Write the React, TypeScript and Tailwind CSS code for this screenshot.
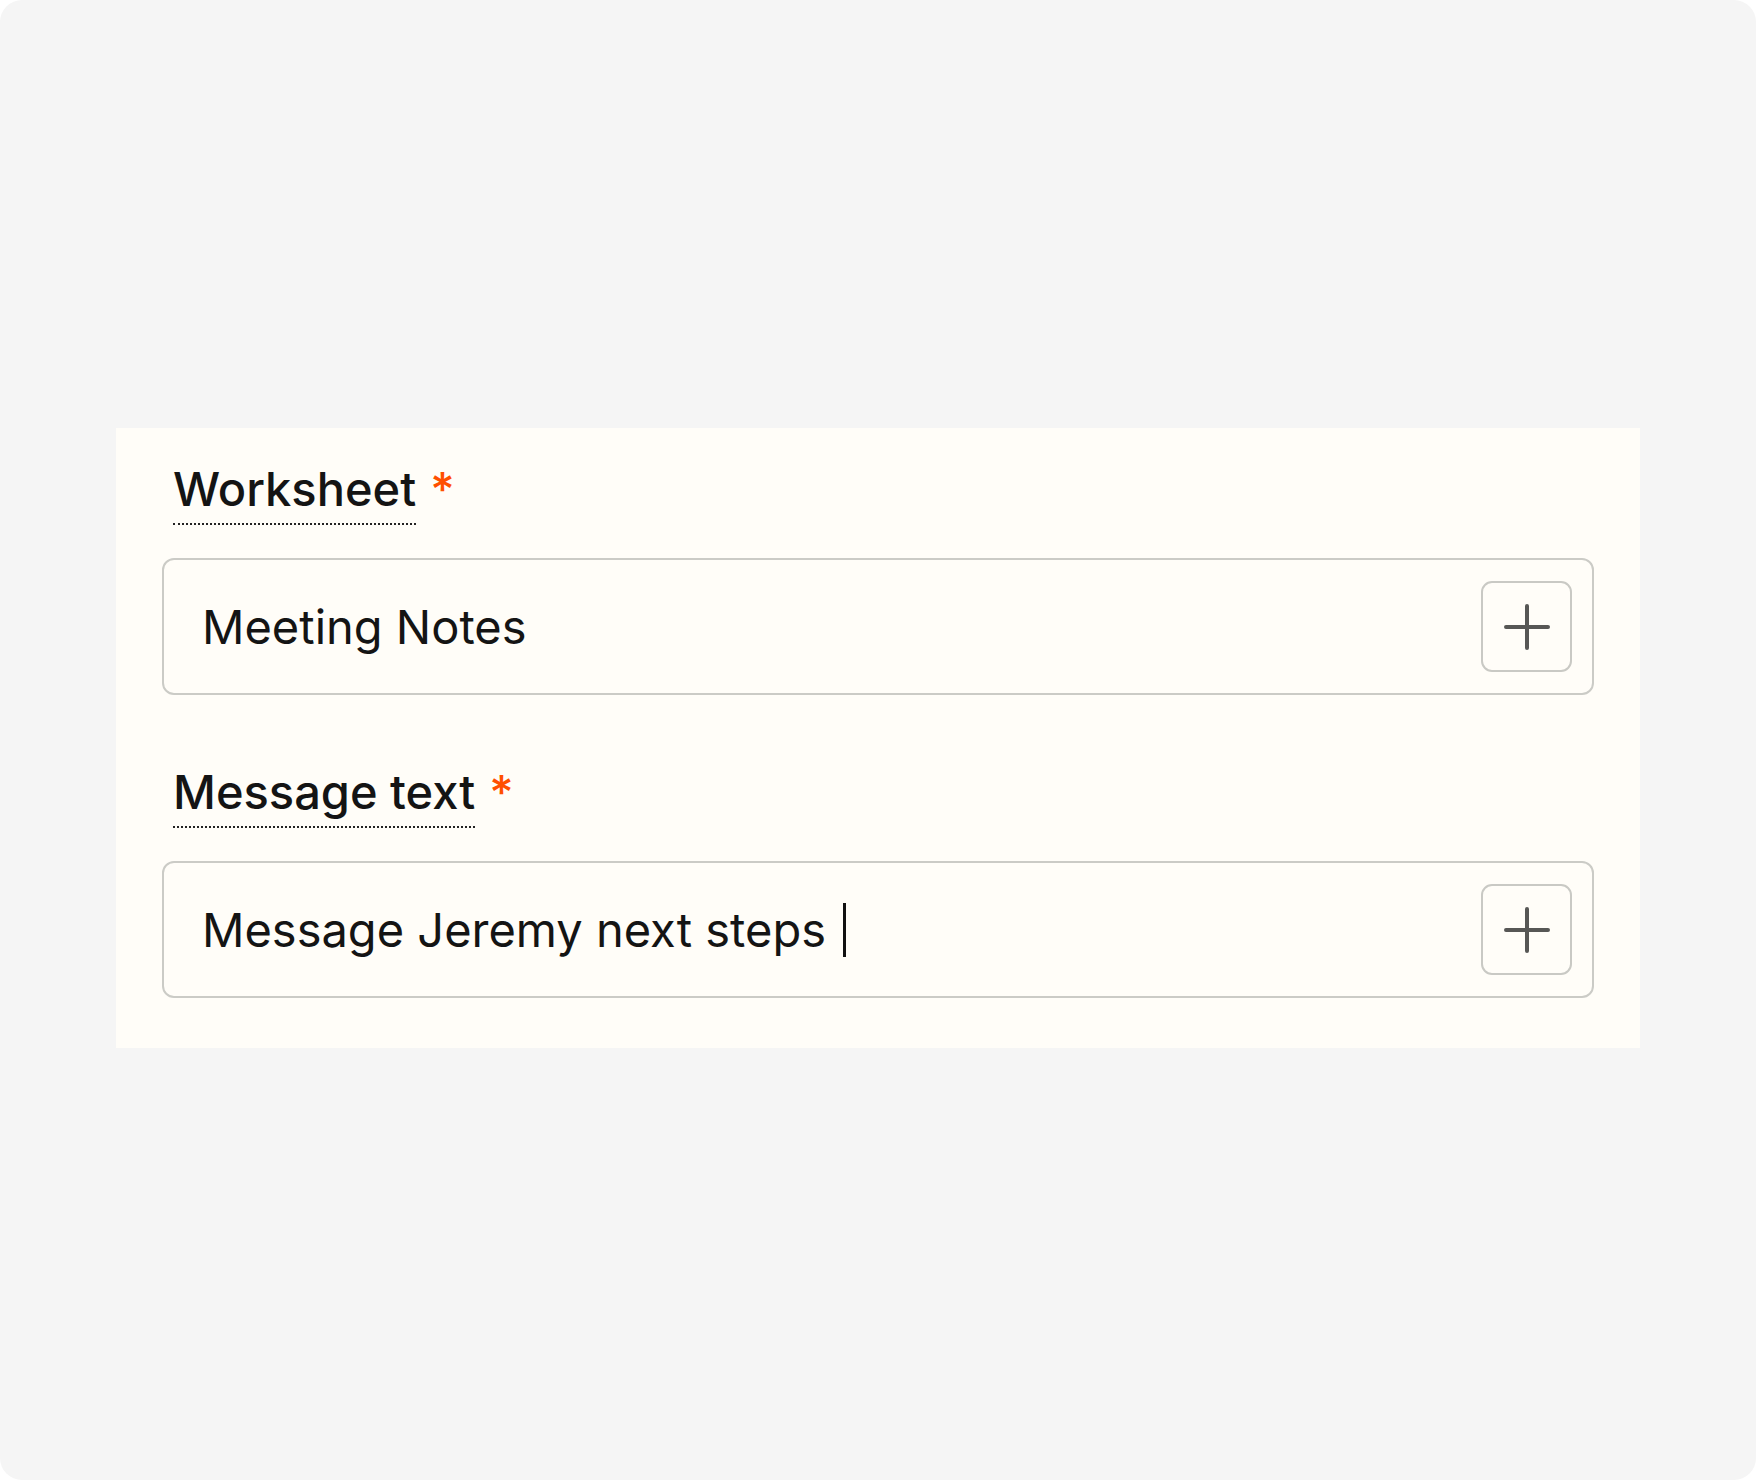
import React from "react";

function PlusIcon() {
  return (
    <svg width="46" height="46" viewBox="0 0 46 46" fill="none">
      <path d="M23 2V44M2 23H44" stroke="#575755" strokeWidth="4" strokeLinecap="round" />
    </svg>
  );
}

function Field({ label, value, caret }: { label: string; value: string; caret?: boolean }) {
  return (
    <div className="flex flex-col">
      <div className="ml-[11px] flex items-start">
        <span className="inline-block border-b-[2px] border-dotted border-[#222] pb-[5px] text-[47px] font-medium leading-[58px] text-[#141414]">
          {label}
        </span>
        <span className="ml-[14px] text-[47px] font-medium leading-[58px] text-[#ff4f00]">*</span>
      </div>
      <div className="mt-[33px] flex h-[137px] items-center rounded-[12px] border-[2.5px] border-[#cbcbc6] pl-[38px] pr-[20px]">
        <div className="flex flex-1 items-center text-[47px] leading-[58px] text-[#141414]">
          <span>{value}</span>
          {caret && <span className="ml-[17px] inline-block h-[54px] w-[3px] bg-[#111]" />}
        </div>
        <div className="flex h-[91px] w-[91px] items-center justify-center rounded-[11px] border-[2.5px] border-[#c9c9c4]">
          <PlusIcon />
        </div>
      </div>
    </div>
  );
}

export default function App() {
  return (
    <div className="h-[1480px] w-[1756px] bg-white" style={{ fontFamily: "Inter, 'Noto Sans', sans-serif" }}>
      <div className="flex h-full w-full flex-col rounded-[22px] bg-[#f5f5f5] pt-[428px] pl-[116px]">
        <div className="flex w-[1524px] flex-col gap-[68px] bg-[#fffdf8] px-[46px] pt-[32px] pb-[50px]">
          <Field label="Worksheet" value="Meeting Notes" />
          <Field label="Message text" value="Message Jeremy next steps" caret />
        </div>
      </div>
    </div>
  );
}
